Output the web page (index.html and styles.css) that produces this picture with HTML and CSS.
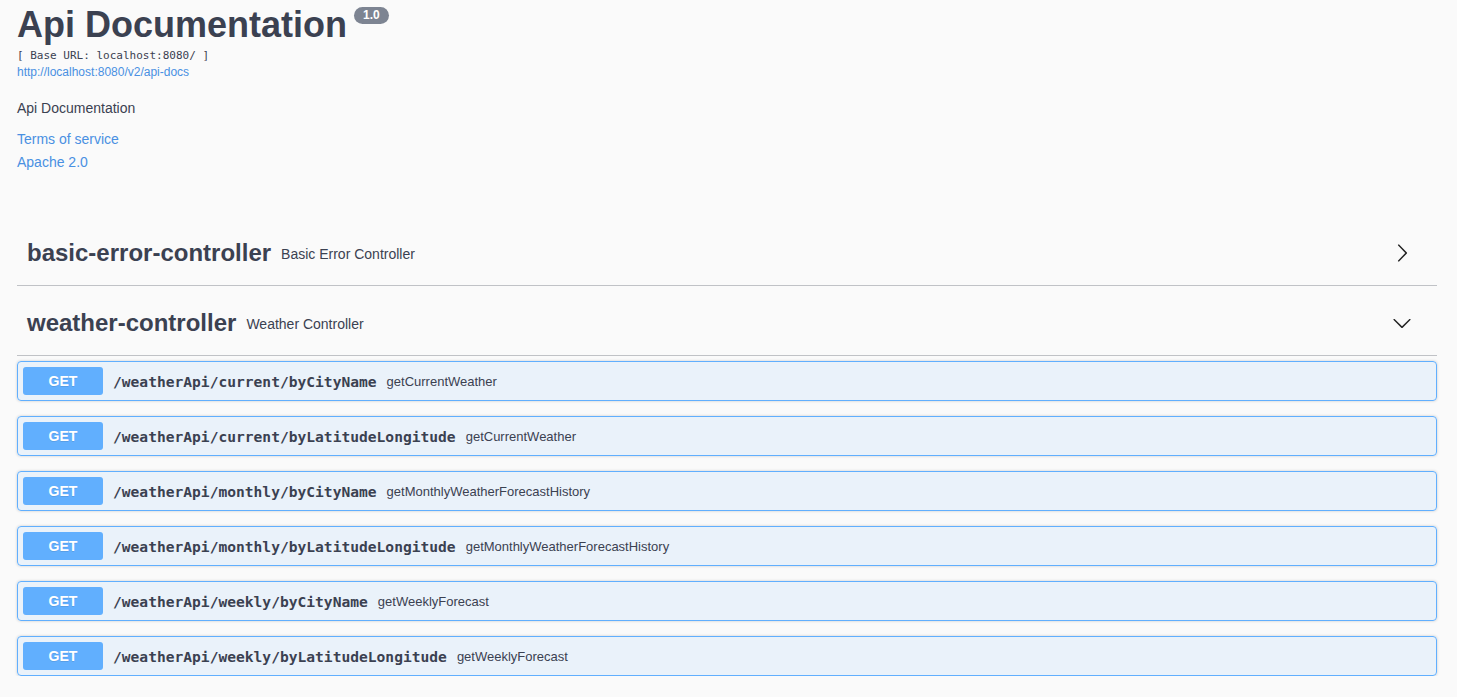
FILE: index.html
```html
<!DOCTYPE html>
<html>
<head>
<meta charset="utf-8">
<title>Api Documentation</title>
<link rel="stylesheet" href="styles.css">
</head>
<body>
<div class="wrapper">
  <section class="info">
    <h2 class="title">Api Documentation<span class="version">1.0</span></h2>
    <pre class="base-url">[ Base URL: localhost:8080/ ]</pre>
    <a class="url" href="#">http://localhost:8080/v2/api-docs</a>
    <p class="description">Api Documentation</p>
    <a class="info-link terms" href="#">Terms of service</a>
    <a class="info-link license" href="#">Apache 2.0</a>
  </section>

  <section class="tag-section">
    <h4 class="tag">
      <span class="tag-name">basic-error-controller</span>
      <small class="tag-desc">Basic Error Controller</small>
      <svg class="arrow" width="20" height="20" viewBox="0 0 20 20"><path d="M13.25 10L6.109 2.58c-.268-.27-.268-.707 0-.979.268-.27.701-.27.969 0l7.83 7.908c.268.271.268.709 0 .979l-7.83 7.908c-.268.271-.701.27-.969 0-.268-.269-.268-.707 0-.979L13.25 10z"/></svg>
    </h4>
  </section>

  <section class="tag-section">
    <h4 class="tag">
      <span class="tag-name">weather-controller</span>
      <small class="tag-desc">Weather Controller</small>
      <svg class="arrow" width="20" height="20" viewBox="0 0 20 20"><path d="M17.418 6.109c.272-.268.709-.268.979 0s.271.701 0 .969l-7.908 7.83c-.27.268-.707.268-.979 0l-7.908-7.830c-.27-.268-.27-.701 0-.969.271-.268.709-.268.979 0L10 13.25l7.418-7.141z"/></svg>
    </h4>
    <div class="ops">
      <div class="opblock"><span class="method">GET</span><span class="path">/weatherApi/current/byCityName</span><span class="summary">getCurrentWeather</span></div>
      <div class="opblock"><span class="method">GET</span><span class="path">/weatherApi/current/byLatitudeLongitude</span><span class="summary">getCurrentWeather</span></div>
      <div class="opblock"><span class="method">GET</span><span class="path">/weatherApi/monthly/byCityName</span><span class="summary">getMonthlyWeatherForecastHistory</span></div>
      <div class="opblock"><span class="method">GET</span><span class="path">/weatherApi/monthly/byLatitudeLongitude</span><span class="summary">getMonthlyWeatherForecastHistory</span></div>
      <div class="opblock"><span class="method">GET</span><span class="path">/weatherApi/weekly/byCityName</span><span class="summary">getWeeklyForecast</span></div>
      <div class="opblock"><span class="method">GET</span><span class="path">/weatherApi/weekly/byLatitudeLongitude</span><span class="summary">getWeeklyForecast</span></div>
    </div>
  </section>
</div>
</body>
</html>
```

FILE: styles.css
```css
html, body {
  margin: 0;
  padding: 0;
  background: #fafafa;
  color: #3b4151;
  font-family: "Liberation Sans", Arial, sans-serif;
}

.wrapper {
  padding: 0 20px 0 17px;
}

.info {
  display: flex;
  flex-direction: column;
  align-items: flex-start;
  margin-bottom: 49px;
}

.title {
  margin: 4px 0 0;
  font-size: 36px;
  font-weight: bold;
  line-height: 41px;
  color: #3b4151;
  display: flex;
  align-items: flex-start;
}

.version {
  margin: 3px 0 0 7px;
  background: #7d8492;
  color: #fff;
  font-size: 12px;
  font-weight: bold;
  line-height: 15px;
  padding: 1px 9px;
  border-radius: 57px;
}

.base-url {
  margin: 4px 0 0;
  font-family: "DejaVu Sans Mono", monospace;
  font-size: 11px;
  line-height: 14px;
  color: #3b4151;
}

.url {
  margin-top: 2px;
  font-size: 12px;
  line-height: 15px;
  color: #4990e2;
  text-decoration: none;
}

.description {
  margin: 18px 0 0;
  font-size: 14px;
  line-height: 20px;
}

.info-link {
  font-size: 14px;
  line-height: 20px;
  color: #4990e2;
  text-decoration: none;
}

.terms { margin-top: 11px; }
.license { margin-top: 3px; }

.tag {
  margin: 0 0 5px;
  height: 64px;
  box-sizing: content-box;
  padding: 0 25px 0 10px;
  display: flex;
  align-items: center;
  border-bottom: 1px solid rgba(59, 65, 81, 0.3);
}

.tag-name {
  font-size: 24px;
  font-weight: bold;
  color: #3b4151;
}

.tag-desc {
  margin-left: 10px;
  font-size: 14px;
  font-weight: normal;
  padding-top: 2px;
}

.arrow {
  margin-left: auto;
  fill: #222;
}

.tag-section:first-of-type .arrow {
  margin-top: -3px;
}

.ops {
  display: flex;
  flex-direction: column;
  gap: 15px;
}

.opblock {
  display: flex;
  align-items: center;
  padding: 5px;
  border: 1px solid #61affe;
  border-radius: 4px;
  background: rgba(97, 175, 254, 0.1);
  box-shadow: 0 0 3px rgba(0, 0, 0, 0.19);
}

.method {
  min-width: 80px;
  box-sizing: border-box;
  padding: 6px 15px;
  text-align: center;
  font-size: 14px;
  line-height: 16px;
  font-weight: bold;
  color: #fff;
  background: #61affe;
  border-radius: 3px;
  text-shadow: 0 1px 0 rgba(0, 0, 0, 0.1);
}

.path {
  padding: 0 10px;
  font-family: "DejaVu Sans Mono", monospace;
  font-size: 14.6px;
  font-weight: bold;
  color: #3b4151;
}

.summary {
  font-size: 13px;
  color: #3b4151;
}
```
